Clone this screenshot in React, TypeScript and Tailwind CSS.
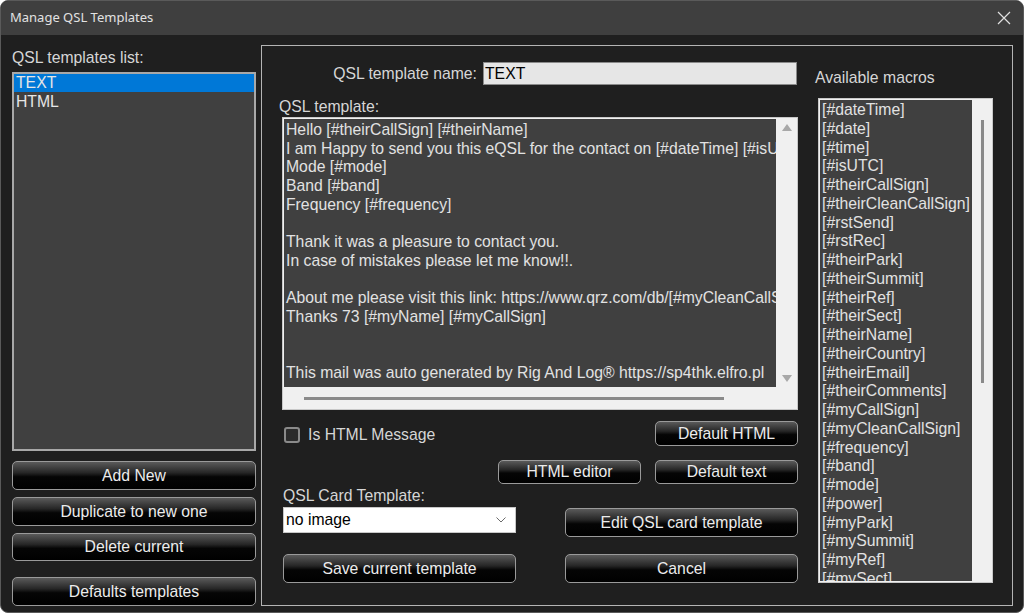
import React from 'react';

const btn =
  'flex items-center justify-center rounded-[5px] border border-[#9a9a9a] bg-[linear-gradient(to_bottom,#5a5a5a_0%,#262626_40%,#050505_55%,#000000_100%)] text-[15.75px] text-[#ececec]';

const templateLines = [
  'Hello [#theirCallSign] [#theirName]',
  'I am Happy to send you this eQSL for the contact on [#dateTime] [#isUTC]',
  'Mode [#mode]',
  'Band [#band]',
  'Frequency [#frequency]',
  '',
  'Thank it was a pleasure to contact you.',
  'In case of mistakes please let me know!!.',
  '',
  'About me please visit this link: https://www.qrz.com/db/[#myCleanCallSign]',
  'Thanks 73 [#myName] [#myCallSign]',
  '',
  '',
  'This mail was auto generated by Rig And Log® https://sp4thk.elfro.pl',
];

const macros = [
  'dateTime', 'date', 'time', 'isUTC', 'theirCallSign', 'theirCleanCallSign', 'rstSend', 'rstRec',
  'theirPark', 'theirSummit', 'theirRef', 'theirSect', 'theirName', 'theirCountry', 'theirEmail',
  'theirComments', 'myCallSign', 'myCleanCallSign', 'frequency', 'band', 'mode', 'power', 'myPark',
  'mySummit', 'myRef', 'mySect', 'myName',
];

const App: React.FC = () => {
  return (
    <div className="w-[1024px] h-[613px] bg-white font-['Liberation_Sans',Arial,sans-serif]">
      <div className="w-full h-full flex flex-col rounded-lg overflow-hidden border border-[#5a5a5a] bg-[#1f1f1f]">
        {/* title bar */}
        <div className="h-[34px] shrink-0 flex items-center justify-between bg-[#3f3f3f] pl-[9px] pr-[12px]">
          <span className="font-['Noto_Sans',sans-serif] text-[13px] text-[#e2e2e2]">Manage QSL Templates</span>
          <svg width="14" height="14" viewBox="0 0 14 14" className="text-[#e0e0e0]">
            <path d="M1 1 L13 13 M13 1 L1 13" stroke="currentColor" strokeWidth="1.2" />
          </svg>
        </div>

        <div className="flex flex-1 pt-[10px] pb-[9px] pl-[11px] pr-[10px] gap-[5px]">
          {/* left column */}
          <div className="w-[244px] flex flex-col">
            <div className="h-[27px] pt-[1px] text-[15.75px] text-[#d6d6d6]">QSL templates list:</div>
            <div className="h-[379px] border-2 border-[#a8a8a8] bg-[#404040] text-[15.75px] text-[#e6e6e6]">
              <div className="h-[18px] leading-[18px] bg-[#0078d7] pl-[2px]">TEXT</div>
              <div className="h-[19px] leading-[19px] pl-[2px]">HTML</div>
            </div>
            <div className="flex flex-col gap-[7px] mt-[10px]">
              <div className={`${btn} h-[29px]`}>Add New</div>
              <div className={`${btn} h-[29px]`}>Duplicate to new one</div>
              <div className={`${btn} h-[28px]`}>Delete current</div>
            </div>
            <div className={`${btn} h-[29px] mt-[16px]`}>Defaults templates</div>
          </div>

          {/* right panel */}
          <div className="flex-1 flex border border-[#b4b4b4] pl-[20px] pr-[19px]">
            {/* main column */}
            <div className="w-[516px] flex flex-col">
              <div className="flex items-center justify-end mt-[16px] h-[23px] gap-[6px] pr-[1px]">
                <span className="text-[15.75px] text-[#d6d6d6]">QSL template name:</span>
                <div className="w-[314px] h-[23px] bg-[#e6e6e6] border border-[#8a8a8a] text-[15.75px] text-black leading-[21px] pl-[1px]">TEXT</div>
              </div>
              <div className="mt-[10px] h-[22px] text-[15.75px] text-[#d6d6d6] -ml-[3px]">QSL template:</div>
              <div className="h-[293px] border border-[#c8c8c8] bg-[#f0f0f0] flex flex-col">
                <div className="flex flex-1 min-h-0">
                  <div className="w-[492px] m-[1px] mr-0 bg-[#404040] overflow-hidden pl-[2px] pt-[2px]">
                    {templateLines.map((l, i) => (
                      <div key={i} className="h-[18.7px] leading-[18.7px] whitespace-pre text-[15.75px] text-[#e2e2e2]">
                        {l}
                      </div>
                    ))}
                  </div>
                  <div className="flex-1 flex flex-col items-center justify-between py-[6px]">
                    <svg width="10" height="7" viewBox="0 0 10 7"><path d="M5 0 L10 7 L0 7 Z" fill="#a8a8a8" /></svg>
                    <svg width="10" height="7" viewBox="0 0 10 7"><path d="M0 0 L10 0 L5 7 Z" fill="#a8a8a8" /></svg>
                  </div>
                </div>
                <div className="h-[21px] shrink-0 flex items-center pl-[21px]">
                  <div className="w-[420px] h-[3px] bg-[#8a8a8a]" />
                </div>
              </div>

              <div className="flex items-center justify-between mt-[11px] h-[25px]">
                <div className="flex items-center gap-[8px] pl-[2px] pt-[3px]">
                  <div className="w-[16px] h-[16px] rounded-[3px] border-2 border-[#8a8a8a] bg-[#2b2b2b]" />
                  <span className="text-[15.75px] text-[#d6d6d6]">Is HTML Message</span>
                </div>
                <div className={`${btn} w-[143px] h-[25px]`}>Default HTML</div>
              </div>

              <div className="flex justify-end gap-[14px] mt-[14px]">
                <div className={`${btn} w-[143px] h-[24px]`}>HTML editor</div>
                <div className={`${btn} w-[143px] h-[24px]`}>Default text</div>
              </div>

              <div className="flex justify-between mt-[2px] pl-[1px]">
                <div className="flex flex-col w-[233px]">
                  <div className="h-[21px] text-[15.75px] text-[#d6d6d6] leading-[19px]">QSL Card Template:</div>
                  <div className="h-[26px] bg-white border border-[#c8c8c8] flex items-center justify-between pl-[2px] pr-[9px] text-[15.75px] text-black">
                    <span>no image</span>
                    <svg width="10" height="6" viewBox="0 0 10 6"><path d="M0.5 0.5 L5 5 L9.5 0.5" stroke="#6a6a6a" fill="none" strokeWidth="1" /></svg>
                  </div>
                </div>
                <div className={`${btn} w-[233px] h-[29px] mt-[22px]`}>Edit QSL card template</div>
              </div>

              <div className="flex justify-between mt-[17px] pl-[1px]">
                <div className={`${btn} w-[233px] h-[29px]`}>Save current template</div>
                <div className={`${btn} w-[233px] h-[29px]`}>Cancel</div>
              </div>
            </div>

            {/* macros column */}
            <div className="flex flex-col ml-[17px]">
              <div className="mt-[20px] h-[32px] text-[15.75px] text-[#d6d6d6]">Available macros</div>
              <div className="ml-[3px] w-[175px] h-[485px] border border-[#c8c8c8] bg-[#f0f0f0] flex">
                <div className="w-[152px] m-[1px] mr-0 bg-[#404040] overflow-hidden pl-[2px] pt-[1px]">
                  {macros.map((m) => (
                    <div key={m} className="h-[18.76px] leading-[18.76px] whitespace-pre text-[15.75px] text-[#e2e2e2]">
                      [#{m}]
                    </div>
                  ))}
                </div>
                <div className="flex-1 flex justify-center pt-[21px]">
                  <div className="w-[3px] h-[263px] bg-[#8a8a8a]" />
                </div>
              </div>
            </div>
          </div>
        </div>
      </div>
    </div>
  );
};

export default App;
